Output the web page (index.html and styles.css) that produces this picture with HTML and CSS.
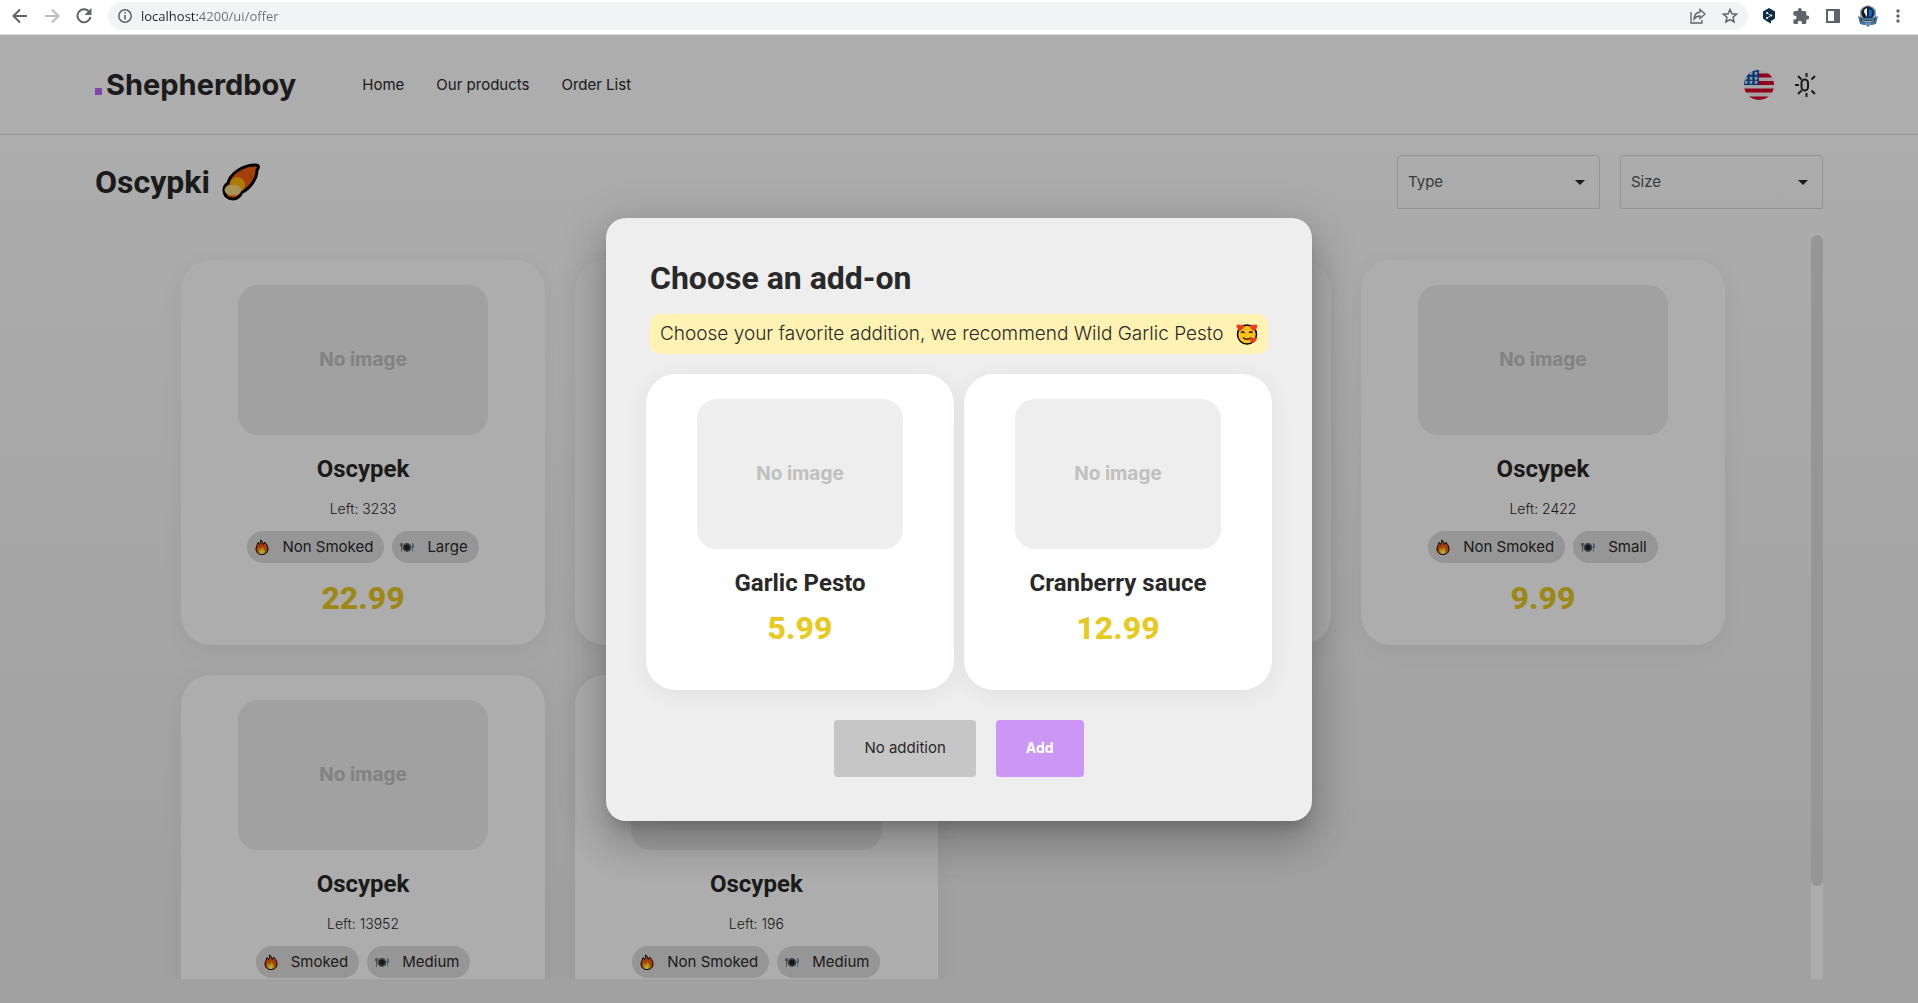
FILE: index.html
```html
<!DOCTYPE html>
<html lang="en">
<head>
<meta charset="utf-8">
<title>Shepherdboy</title>
<link rel="stylesheet" href="styles.css">
</head>
<body>
<svg class="defs" aria-hidden="true">
  <symbol id="flame" viewBox="0 0 26 32">
    <path d="M10 2c5 3 5 7 5 9 2-1 3-3 3-5 5 5 7 9 7 14 0 7-5 11-12 11S1 27 1 20C1 15 4 12 5 7c2 1 3 2 3 4 2-3 3-5 2-9z" fill="#f4600c" stroke="#000" stroke-width="2"/>
    <path d="M13 15c3 3 6 6 6 10 0 3-2 5-6 5s-7-2-7-6c0-3 1-4 2-6 1 2 2 3 3 3 1-2 2-3 2-6z" fill="#fdd017"/>
    <path d="M13 22c2 2 3 3 3 5s-1 3-3 3-4-1-4-3 2-3 4-5z" fill="#fff36b"/>
  </symbol>
  <symbol id="plate" viewBox="0 0 26 20">
    <circle cx="13" cy="10" r="8" fill="#5c5f66"/>
    <circle cx="13" cy="10" r="5" fill="#222"/>
    <path d="M1 2v5h4V2M3 2v16" fill="none" stroke="#6d6a66" stroke-width="1.6"/>
    <path d="M23 18V2q2 3 2 8h-2" fill="#3b86b8" stroke="#3b7fa8" stroke-width="1.2"/>
  </symbol>
</svg>

<header class="browser">
  <button class="tool" aria-label="Back"><svg width="16" height="16" viewBox="0 0 16 16"><path d="M15 8H2M8 1.5 1.5 8 8 14.500" fill="none" stroke="#5f6368" stroke-width="2"/></svg></button>
  <button class="tool" aria-label="Forward"><svg width="16" height="16" viewBox="0 0 16 16"><path d="M1 8h13M8 1.500 14.500 8 8 14.500" fill="none" stroke="#babcbe" stroke-width="2"/></svg></button>
  <button class="tool" aria-label="Reload"><svg width="16" height="16" viewBox="0 0 16 16"><path d="M13.600 4.500A6.500 6.500 0 1 0 14.400 9" fill="none" stroke="#5f6368" stroke-width="2"/><path d="M15.500 0v7h-7z" fill="#5f6368"/></svg></button>
  <div class="address">
    <svg width="14" height="14" viewBox="0 0 14 14"><circle cx="7" cy="7" r="6.200" fill="none" stroke="#5f6368" stroke-width="1.500"/><path d="M7 6v4.500M7 3.200v1.600" stroke="#5f6368" stroke-width="1.600"/></svg>
    <input class="url" type="text" aria-label="Address" value="localhost:4200/ui/offer">
    <svg width="16" height="16" viewBox="0 0 16 16"><path d="M1 4v11h11v-3" fill="none" stroke="#5f6368" stroke-width="1.300"/><path d="M10 1.500 15 6l-5 4.500V8C7 8 5.500 9 4 11c.3-4 2.500-6.500 6-7z" fill="none" stroke="#5f6368" stroke-width="1.300"/></svg>
    <svg width="16" height="16" viewBox="0 0 16 16"><path d="m8 1.500 1.900 4.300 4.700.4-3.600 3.100 1.100 4.600L8 11.500l-4.100 2.400L5 9.300 1.400 6.200l4.700-.4z" fill="none" stroke="#5f6368" stroke-width="1.500"/></svg>
  </div>
  <div class="extensions">
    <svg width="14" height="16" viewBox="0 0 14 16"><path d="M7 0l6 3.500v7L9 13v2.500L6 14l-5-3.500v-7z" fill="#0f2b46"/><path d="M5 5l4 2.500L5 10" fill="none" stroke="#dbe6f0" stroke-width=".8"/><g fill="#fff"><circle cx="5" cy="5" r="1"/><circle cx="9.300" cy="7.500" r="1"/><circle cx="5" cy="10" r="1"/></g></svg>
    <svg width="16" height="16" viewBox="2 1 20 21"><path d="M20.500 11H19V7a2 2 0 0 0-2-2h-4V3.500a2.500 2.500 0 0 0-5 0V5H4a2 2 0 0 0-2 2v3.800h1.500a2.700 2.700 0 0 1 0 5.400H2V20a2 2 0 0 0 2 2h3.800v-1.500a2.700 2.700 0 0 1 5.400 0V22H17a2 2 0 0 0 2-2v-4h1.500a2.500 2.500 0 0 0 0-5z" fill="#5f6368"/></svg>
    <svg width="14" height="14" viewBox="0 0 14 14"><path d="M0 0h14v14H0zM2 2v10h6V2z" fill="#5f6368" fill-rule="evenodd"/></svg>
    <svg width="22" height="22" viewBox="0 0 22 22"><path d="M3 5l3-3 5-2 5 2 3 3v8H3z" fill="#9aa0a3"/><circle cx="11" cy="8" r="6.500" fill="#0c2e60"/><path d="M11 1.500a6.500 6.500 0 0 0 0 13z" fill="#17191d"/><path d="M10 3c-3 1-3.500 3-2.500 5L10 12.500z" fill="#eee"/><path d="M12 4l3.500 2-1 5-2.500 1z" fill="#1767b5"/><path d="M1 11l5 2h10l5-2-2 8-4 1h-2l-2 2-2-2H7l-4-1z" fill="#3a77a8"/><path d="M3 13l4 2h8l4-2-1 4H4z" fill="#3b4249"/><path d="M5 15.500l3 1h6l3-1M8 19h6" fill="none" stroke="#a9aeb1"/></svg>
    <svg width="4" height="16" viewBox="0 0 4 16"><g fill="#5f6368"><circle cx="2" cy="3" r="1.700"/><circle cx="2" cy="8" r="1.700"/><circle cx="2" cy="13" r="1.700"/></g></svg>
  </div>
</header>

<div class="app">
  <header class="topbar">
    <a class="brand" href="#"><span class="brand-dot"></span>Shepherdboy</a>
    <nav class="nav">
      <a href="#">Home</a>
      <a href="#">Our products</a>
      <a href="#">Order List</a>
    </nav>
    <div class="preferences">
      <button class="plain" aria-label="Language">
        <svg width="30" height="30" viewBox="0 0 30 30"><clipPath id="round"><circle cx="15" cy="15" r="15"/></clipPath><g clip-path="url(#round)"><path fill="#f4f0f0" d="M0 0h30v30H0z"/><path d="M0 5.500h30M0 13h30M0 20.500h30M0 28.500h30" stroke="#d80027" stroke-width="4"/><path fill="#0052b4" d="M0 0h15v15H0z"/><g fill="#f4f0f0"><path id="star" d="m7 1 .6 1.600h1.700L8 3.600l.5 1.600L7 4.200l-1.500 1 .5-1.600-1.300-1h1.700z"/><use href="#star" x="5"/><use href="#star" y="5"/><use href="#star" x="5" y="5"/><use href="#star" x="-5" y="5"/><use href="#star" x="-5" y="9"/><use href="#star" y="9"/><use href="#star" x="5" y="9"/></g></g></svg>
      </button>
      <button class="plain" aria-label="Theme">
        <svg width="24" height="26" viewBox="0 0 24 26"><g fill="none" stroke="#292929" stroke-width="2"><rect x="7.500" y="7.500" width="6.500" height="11" rx="3.200"/><path d="M12.500 1v4M12.500 21v4M1 13h4M4 4l3.500 3.500M4 22l3.500-3.500M21 4l-3.500 3.500M21 22l-3.500-3.500"/></g></svg>
      </button>
    </div>
  </header>

  <main class="page">
    <div class="heading">
      <h1>Oscypki</h1>
      <svg width="38" height="38" viewBox="0 0 38 38"><path d="M2 27c0-5 3-6 4-7 2-9 14-18 28-18 3 0 3 3 1 5 0 10-9 20-15 22-2 5-5 7-9 7-5 0-9-3-9-9z" fill="#f4600c" stroke="#000" stroke-width="3" stroke-linejoin="round"/><path d="M8 21c1-6 6-8 11-6 5 3 5 9 1 13z" fill="#fcb900"/><ellipse cx="11" cy="27" rx="8.500" ry="5.500" fill="#fbd67c"/><path d="M16 9q3-2 5 1M27 10q2 2 2 5" fill="none" stroke="#b9400c"/></svg>
      <div class="filters">
        <span class="filter"><select aria-label="Type"><option>Type</option></select></span>
        <span class="filter"><select aria-label="Size"><option>Size</option></select></span>
      </div>
    </div>

    <div class="offer">
      <div class="products">
        <article class="card">
          <div class="picture">No image</div>
          <h2>Oscypek</h2>
          <p class="stock">Left: 3233</p>
          <div class="chips"><span class="chip"><svg><use href="#flame"/></svg>Non Smoked</span><span class="chip"><svg><use href="#plate"/></svg>Large</span></div>
          <p class="price">22.99</p>
        </article>
        <article class="card"></article>
        <article class="card"></article>
        <article class="card">
          <div class="picture">No image</div>
          <h2>Oscypek</h2>
          <p class="stock">Left: 2422</p>
          <div class="chips"><span class="chip"><svg><use href="#flame"/></svg>Non Smoked</span><span class="chip"><svg><use href="#plate"/></svg>Small</span></div>
          <p class="price">9.99</p>
        </article>
        <article class="card">
          <div class="picture">No image</div>
          <h2>Oscypek</h2>
          <p class="stock">Left: 13952</p>
          <div class="chips"><span class="chip"><svg><use href="#flame"/></svg>Smoked</span><span class="chip"><svg><use href="#plate"/></svg>Medium</span></div>
        </article>
        <article class="card">
          <div class="picture"></div>
          <h2>Oscypek</h2>
          <p class="stock">Left: 196</p>
          <div class="chips"><span class="chip"><svg><use href="#flame"/></svg>Non Smoked</span><span class="chip"><svg><use href="#plate"/></svg>Medium</span></div>
        </article>
      </div>
      <div class="track"><div class="thumb"></div></div>
    </div>
  </main>

  <div class="backdrop">
    <section class="dialog" role="dialog" aria-labelledby="dialog-title">
      <h2 class="dialog-title" id="dialog-title">Choose an add-on</h2>
      <p class="hint">Choose your favorite addition, we recommend Wild Garlic Pesto
        <svg width="22" height="22" viewBox="0 0 22 22"><circle cx="11" cy="11.500" r="9.500" fill="#fcc21b" stroke="#000" stroke-width="1.500"/><path d="M5 10q1.500-2.500 3.500 0M13 10q1.500-2.500 3.500 0M7 14.500q4 3.500 8 0" fill="none" stroke="#2b1a00" stroke-width="1.300"/><g fill="#f03a17"><path d="M4 8C0 5 0 2 2 1.500q2-.5 2.500 1 1-1.500 2.800-.6C9 3 7.500 6 4 8z"/><path d="M18 8c4-3 4-6 2-6.500q-2-.5-2.500 1-1-1.500-2.800-.6C13 3 14.500 6 18 8z"/><path d="M17 20c4-2 4.500-5 2.500-5.500q-1.800-.3-2.500 1-1-1.400-2.500-.6c-1.500 1-.5 3.600 2.500 5.100z"/></g></svg>
      </p>
      <div class="addons">
        <article class="card">
          <div class="picture">No image</div>
          <h2>Garlic Pesto</h2>
          <p class="price">5.99</p>
        </article>
        <article class="card">
          <div class="picture">No image</div>
          <h2>Cranberry sauce</h2>
          <p class="price">12.99</p>
        </article>
      </div>
      <div class="actions">
        <button class="button">No addition</button>
        <button class="button primary">Add</button>
      </div>
    </section>
  </div>
</div>
</body>
</html>
```

FILE: styles.css
```css
* { box-sizing: border-box; }

body {
  margin: 0;
  height: 100vh;
  display: flex;
  flex-direction: column;
  overflow: hidden;
  font-family: Inter, "Open Sans", sans-serif;
  font-size: 15px;
  line-height: 20px;
  color: #292929;
}

h1, h2, p { margin: 0; }
a { color: inherit; text-decoration: none; }
button, input, select { font: inherit; color: inherit; }
svg { display: block; flex: none; }
.defs { position: absolute; width: 0; height: 0; }

/* Browser toolbar */
.browser {
  display: flex;
  align-items: center;
  height: 35px;
  padding: 0 18px 3px 12px;
  background: #fff;
  border-bottom: 1px solid #d5d7da;
}
.tool {
  width: 32px;
  padding: 0;
  border: 0;
  background: none;
}
.address {
  flex: 1;
  display: flex;
  align-items: center;
  gap: 16px;
  height: 28px;
  padding: 0 10px;
  border-radius: 14px;
  background: #f1f3f4;
}
.url {
  flex: 1;
  margin-left: -7px;
  padding: 0;
  border: 0;
  outline: 0;
  font: 13px/16px "Open Sans", sans-serif;
  color: transparent;
  background: linear-gradient(to right, #202124 57px, #6b6f73 57px);
  -webkit-background-clip: text;
  background-clip: text;
}
.extensions {
  display: flex;
  align-items: center;
  gap: 17px;
  padding-left: 14px;
}

/* Application shell */
.app {
  position: relative;
  flex: 1;
  min-height: 0;
  display: flex;
  flex-direction: column;
  background: linear-gradient(#fff 10%, #ededed 90%);
}
.topbar {
  display: flex;
  align-items: center;
  height: 100px;
  padding: 0 95px;
  background: #fff;
  border-bottom: 1px solid #dedede;
}
.brand {
  display: flex;
  align-items: baseline;
  gap: 4px;
  font-size: 29px;
  line-height: 40px;
  font-weight: 700;
}
.brand-dot {
  width: 7px;
  height: 7px;
  background: #bc66f8;
}
.nav {
  display: flex;
  gap: 32px;
  margin-left: 66px;
}
.preferences {
  display: flex;
  align-items: center;
  gap: 20px;
  margin-left: auto;
  padding-right: 5px;
}
.plain {
  padding: 0;
  border: 0;
  background: none;
}

.page {
  flex: 1;
  min-height: 0;
  display: flex;
  flex-direction: column;
  padding: 20px 95px 24px;
}
.heading {
  display: flex;
  align-items: center;
  gap: 12px;
  height: 54px;
}
h1, h2 { font-family: Roboto, sans-serif; font-weight: 700; }
h1, .dialog-title { font-size: 32px; line-height: 40px; }
.filters {
  display: flex;
  gap: 20px;
  margin-left: auto;
}
.filter {
  display: grid;
  align-items: center;
  width: 203px;
  height: 54px;
  border: 1px solid #dadada;
  border-radius: 4px 4px 0 0;
}
.filter select, .filter::after { grid-area: 1 / 1; }
.filter select {
  height: 100%;
  padding: 0 10px;
  border: 0;
  background: none;
  appearance: none;
  color: #555;
}
.filter::after {
  content: "";
  justify-self: end;
  margin-right: 14px;
  border: 5px solid transparent;
  border-top-color: #292929;
  border-bottom: 0;
}

.offer {
  flex: 1;
  min-height: 0;
  display: flex;
  margin-top: 26px;
}
.products {
  flex: 1;
  display: grid;
  grid-template-columns: repeat(4, 1fr);
  grid-auto-rows: 385px;
  gap: 30px;
  padding: 25px 5%;
  overflow: hidden;
}
.track { width: 12px; background: #fff; }
.thumb {
  height: 87.5%;
  border-radius: 6px;
  background: #dedede;
}

/* Cards */
.card {
  display: flex;
  flex-direction: column;
  align-items: center;
  padding: 25px;
  border-radius: 30px;
  background: #fff;
  box-shadow: 0 4px 24px rgba(0, 0, 0, .06);
}
.picture {
  display: grid;
  place-items: center;
  width: 80%;
  height: 150px;
  margin-bottom: 20px;
  border-radius: 20px;
  background: #eee;
  color: #c0c0c0;
  font-size: 19px;
  font-weight: 700;
}
.card h2 {
  font-size: 24px;
  line-height: 28px;
}
.stock {
  margin-top: 16px;
  font-size: 14px;
  font-weight: 300;
}
.chips {
  display: flex;
  gap: 8px;
  margin: 12px 0 4px;
}
.chip {
  display: flex;
  align-items: center;
  gap: 12px;
  height: 32px;
  padding: 0 11px 0 7px;
  border-radius: 16px;
  background: #dedede;
}
.chip svg { width: 16px; height: 16px; }
.chip:last-child svg { height: 11px; }
.price {
  margin-top: 12px;
  font: 800 32px/38px Roboto, sans-serif;
  color: #e8c91f;
}

/* Dialog */
.backdrop {
  position: absolute;
  inset: 0;
  display: grid;
  place-items: center;
  background: rgba(0, 0, 0, .32);
}
.dialog {
  width: 706px;
  max-width: 80vw;
  padding: 40px 40px 44px;
  border-radius: 20px;
  background: #eee;
  box-shadow: 0 11px 15px -7px rgba(0, 0, 0, .2), 0 24px 38px 3px rgba(0, 0, 0, .14), 0 9px 46px 8px rgba(0, 0, 0, .12);
}
.dialog-title { margin: 0 4px 16px; }
.hint {
  display: flex;
  align-items: center;
  justify-content: space-between;
  height: 40px;
  margin: 0 4px 20px;
  padding: 0 10px;
  border-radius: 10px;
  background: #fff2b2;
  font-size: 19px;
  font-weight: 300;
  white-space: nowrap;
}
.addons {
  display: grid;
  grid-template-columns: 1fr 1fr;
  grid-auto-rows: 316px;
  gap: 10px;
}
.actions {
  display: flex;
  justify-content: center;
  gap: 20px;
  margin-top: 30px;
}
.button {
  height: 57px;
  padding: 0 30px;
  border: 0;
  border-radius: 4px;
  background: #c6c6c6;
}
.button.primary {
  background: #cc96f5;
  color: #fff;
  font-size: 14px;
  font-weight: 700;
}
```
